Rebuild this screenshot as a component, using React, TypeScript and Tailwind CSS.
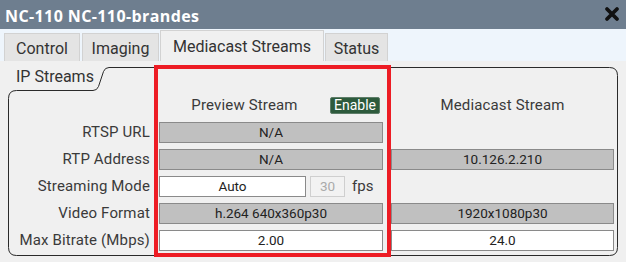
import React from "react";

const field = "h-[21px] flex items-center justify-center text-[13.5px] text-[#222] border";
const gray = `${field} bg-[#c0c0c0] border-[#8a8a8a]`;
const white = `${field} bg-white border-[#8a8a8a]`;
const label = "h-[21px] flex items-center justify-end pr-[1px] text-[15px] tracking-[0.15px] text-[#3a3a3a] whitespace-nowrap";

export default function App() {
  return (
    <div
      className="relative w-[626px] h-[262px] overflow-hidden bg-[#f0f0f0] flex flex-col"
      style={{ fontFamily: "Roboto, 'Open Sans', sans-serif" }}
    >
      {/* Title bar */}
      <div className="h-[29px] bg-[#6e7e8f] flex items-center justify-between pl-[5px] pr-[4px]">
        <div
          className="text-white font-bold text-[16px] pt-[2px] tracking-[0.4px]"
          style={{ fontFamily: "'Open Sans', sans-serif" }}
        >
          NC-110 NC-110-brandes
        </div>
        <svg width="16" height="16" viewBox="0 0 16 16" className="mr-[2px] mt-[-1px]">
          <path d="M3 3 L13 13 M13 3 L3 13" stroke="#111" strokeWidth="3.8" strokeLinecap="round" />
        </svg>
      </div>

      {/* Tab strip */}
      <div className="h-[32px] bg-[#eef5fc] flex items-end pl-[4px] text-[16px] text-[#333]">
        <div className="w-[76px] h-[28px] pt-[2px] bg-[#e4e4e4] border border-b-0 border-[#d2d2d2] flex items-center justify-center">
          Control
        </div>
        <div className="ml-[2px] w-[77px] h-[28px] pt-[2px] bg-[#e4e4e4] border border-b-0 border-[#d2d2d2] flex items-center justify-center">
          Imaging
        </div>
        <div className="ml-[1px] w-[164px] h-[31px] pt-[1px] bg-[#f0f0f0] border border-b-0 border-[#d2d2d2] flex items-center justify-center">
          Mediacast Streams
        </div>
        <div className="ml-[1px] w-[63px] h-[28px] pt-[2px] bg-[#e4e4e4] border border-b-0 border-[#d2d2d2] flex items-center justify-center">
          Status
        </div>
      </div>

      {/* Content */}
      <div className="flex-1 pl-[8px] pt-[1px]">
        <div className="relative w-[610px] h-[196px]">
          <svg className="absolute inset-0" width="610" height="196" viewBox="0 0 610 196">
            <path
              d="M0.5 185.5 L0.5 36.5 Q0.5 28.5 8.5 28.5 L85 28.5 Q89 28.5 90.5 24.5 L95.5 9.5 Q97 5.5 101 5.5 L601.5 5.5 Q609.5 5.5 609.5 13.5 L609.5 185.5 Q609.5 193.5 601.5 193.5 L8.5 193.5 Q0.5 193.5 0.5 185.5 Z"
              fill="none"
              stroke="#2a2a2a"
              strokeWidth="1"
            />
          </svg>
          <div className="relative flex flex-col">
            <div className="h-[28px] pl-[8px] pt-[2px] flex items-center text-[16px] text-[#333]">IP Streams</div>
            <div className="mt-[5px] grid grid-cols-[143px_224px_223px] gap-x-[8px] gap-y-[6px]">
              {/* header */}
              <div className="h-[21px]" />
              <div className="h-[21px] flex items-center">
                <div className="flex-1 text-center text-[15px] tracking-[0.15px] text-[#3a3a3a]">Preview Stream</div>
                <div className="w-[50px] h-[17px] mr-[3px] bg-[#2d5a3c] border border-[#5d7d68] rounded-[2px] flex items-center justify-center text-white text-[14px]">
                  Enable
                </div>
              </div>
              <div className="h-[21px] flex items-center justify-center text-[15px] tracking-[0.15px] text-[#3a3a3a]">Mediacast Stream</div>

              {/* RTSP URL */}
              <div className={label}>RTSP URL</div>
              <div className={gray}>N/A</div>
              <div className="h-[21px]" />

              {/* RTP Address */}
              <div className={label}>RTP Address</div>
              <div className={gray}>N/A</div>
              <div className={gray}>10.126.2.210</div>

              {/* Streaming Mode */}
              <div className={label}>Streaming Mode</div>
              <div className="h-[21px] flex items-center">
                <div className={`${white} w-[147px]`}>Auto</div>
                <div className="ml-[4px] w-[35px] h-[21px] flex items-center justify-center text-[13.5px] text-[#aaa] bg-[#f2f2f2] border border-[#cfcfcf]">
                  30
                </div>
                <div className="ml-[7px] text-[15px] text-[#3a3a3a]">fps</div>
              </div>
              <div className="h-[21px]" />

              {/* Video Format */}
              <div className={label}>Video Format</div>
              <div className={gray}>h.264 640x360p30</div>
              <div className={gray}>1920x1080p30</div>

              {/* Max Bitrate */}
              <div className={label}>Max Bitrate (Mbps)</div>
              <div className={white}>2.00</div>
              <div className={white}>24.0</div>
            </div>
          </div>
        </div>
      </div>

      {/* Red annotation box */}
      <div className="absolute left-[154px] top-[65px] w-[237px] h-[192px] border-[4px] border-[#ed1c24] pointer-events-none" />
    </div>
  );
}
